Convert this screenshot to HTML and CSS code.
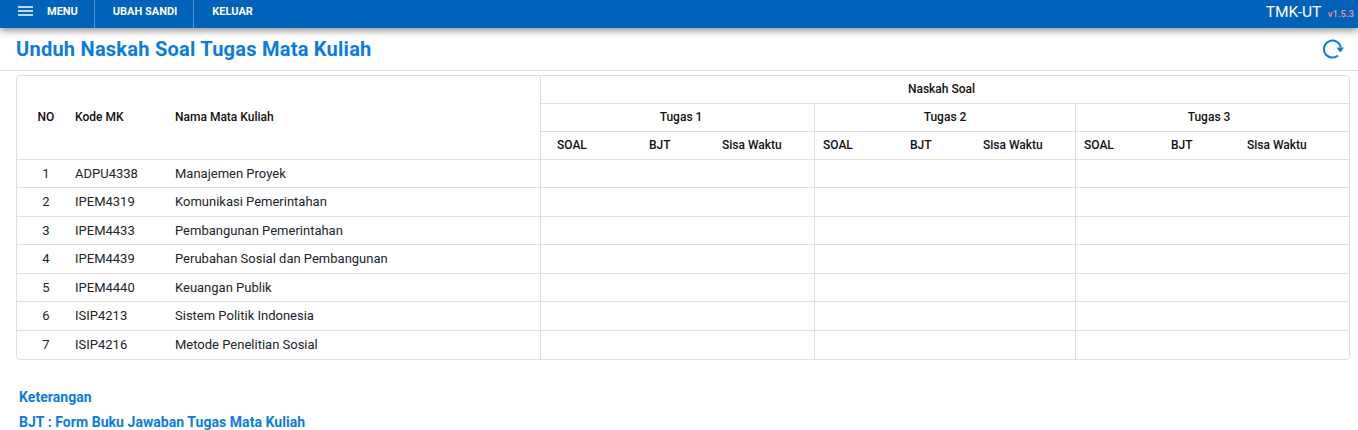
FILE: index.html
```html
<!DOCTYPE html>
<html>
<head>
  <title>Unduh Naskah Soal Tugas Mata Kuliah</title>
  <link rel="stylesheet" href="styles.css">
</head>
<body>
  <header class="topbar">
    <nav class="nav">
      <a class="nav-item nav-menu">
        <svg class="burger" width="15" height="10" viewBox="0 0 15 10"><path d="M0 1h15M0 5h15M0 9h15" stroke="#fff" stroke-width="1.7" fill="none"/></svg>
        MENU
      </a>
      <a class="nav-item">UBAH SANDI</a>
      <a class="nav-item nav-last">KELUAR</a>
    </nav>
    <div class="brand">TMK-UT <span class="version">v1.5.3</span></div>
  </header>

  <div class="title-row">
    <h1>Unduh Naskah Soal Tugas Mata Kuliah</h1>
    <svg class="refresh" width="21" height="20" viewBox="0 0 21 20">
      <path d="M15 16.500A8.500 8.500 0 1 1 17.800 8.500" fill="none" stroke="#0a7ce0" stroke-width="2"/>
      <path d="M13.500 8.500h7.500l-3.700 5z" fill="#0a7ce0"/>
    </svg>
  </div>

  <div class="table-wrap">
    <table class="grid">
      <colgroup>
        <col style="width:50px"><col style="width:100px"><col style="width:374px">
        <col style="width:100px"><col style="width:73px"><col style="width:101px">
        <col style="width:87px"><col style="width:73px"><col style="width:101px">
        <col style="width:87px"><col style="width:76px"><col>
      </colgroup>
      <thead>
        <tr>
          <th rowspan="3" class="no">NO</th>
          <th rowspan="3" class="left">Kode MK</th>
          <th rowspan="3" class="left sep">Nama Mata Kuliah</th>
          <th colspan="9" class="push-left">Naskah Soal</th>
        </tr>
        <tr>
          <th colspan="3" class="sep push-right">Tugas 1</th>
          <th colspan="3" class="sep">Tugas 2</th>
          <th colspan="3" class="push-left">Tugas 3</th>
        </tr>
        <tr>
          <th class="left first">SOAL</th><th class="left">BJT</th><th class="left sep">Sisa Waktu</th>
          <th class="left">SOAL</th><th class="left">BJT</th><th class="left sep">Sisa Waktu</th>
          <th class="left">SOAL</th><th class="left">BJT</th><th class="left">Sisa Waktu</th>
        </tr>
      </thead>
      <tbody>
        <tr><td class="no">1</td><td>ADPU4338</td><td class="sep">Manajemen Proyek</td><td></td><td></td><td class="sep"></td><td></td><td></td><td class="sep"></td><td></td><td></td><td></td></tr>
        <tr><td class="no">2</td><td>IPEM4319</td><td class="sep">Komunikasi Pemerintahan</td><td></td><td></td><td class="sep"></td><td></td><td></td><td class="sep"></td><td></td><td></td><td></td></tr>
        <tr><td class="no">3</td><td>IPEM4433</td><td class="sep">Pembangunan Pemerintahan</td><td></td><td></td><td class="sep"></td><td></td><td></td><td class="sep"></td><td></td><td></td><td></td></tr>
        <tr><td class="no">4</td><td>IPEM4439</td><td class="sep">Perubahan Sosial dan Pembangunan</td><td></td><td></td><td class="sep"></td><td></td><td></td><td class="sep"></td><td></td><td></td><td></td></tr>
        <tr><td class="no">5</td><td>IPEM4440</td><td class="sep">Keuangan Publik</td><td></td><td></td><td class="sep"></td><td></td><td></td><td class="sep"></td><td></td><td></td><td></td></tr>
        <tr><td class="no">6</td><td>ISIP4213</td><td class="sep">Sistem Politik Indonesia</td><td></td><td></td><td class="sep"></td><td></td><td></td><td class="sep"></td><td></td><td></td><td></td></tr>
        <tr><td class="no">7</td><td>ISIP4216</td><td class="sep">Metode Penelitian Sosial</td><td></td><td></td><td class="sep"></td><td></td><td></td><td class="sep"></td><td></td><td></td><td></td></tr>
      </tbody>
    </table>
  </div>

  <div class="notes">
    <p>Keterangan</p>
    <p>BJT : Form Buku Jawaban Tugas Mata Kuliah</p>
  </div>
</body>
</html>
```

FILE: styles.css
```css
html, body {
  height: 430px;
  overflow: hidden;
}
body {
  font-family: Roboto, sans-serif;
  font-size: 13px;
  line-height: 1.5;
  background-color: #fff;
  color: #212529;
  margin: 0;
  padding: 0;
}
.topbar {
  display: flex;
  align-items: flex-start;
  justify-content: space-between;
  height: 28px;
  background-color: #0062b8;
  box-shadow: 0 2px 8px rgba(0,0,0,0.5);
  color: #fff;
}
.nav {
  display: flex;
}
.nav-item {
  display: flex;
  align-items: center;
  height: 28px;
  padding: 0 16px 4px 18px;
  box-sizing: border-box;
  font-size: 11px;
  font-weight: 700;
  border-right: 1px solid #4a90cf;
}
.nav-last {
  border-right: none;
}
.burger {
  margin: 0 14px 2px 0;
}
.brand {
  font-size: 15.500px;
  line-height: 24px;
  padding-right: 4px;
}
.version {
  font-size: 9.500px;
  font-weight: 500;
  margin-left: 3px;
  color: #f0909f;
}
.title-row {
  display: flex;
  align-items: center;
  justify-content: space-between;
  height: 42px;
  padding: 0 14px 0 16px;
  border-bottom: 1px solid #e0e0e0;
}
h1 {
  font-size: 20px;
  font-weight: 700;
  letter-spacing: 0.25px;
  color: #0a7ce0;
  margin: 0;
}
.refresh {
  display: block;
}
.table-wrap {
  margin: 3.800px 8px 0 16px;
  border: 1px solid #e0e0e0;
  border-radius: 4px;
}
.grid {
  width: 100%;
  table-layout: fixed;
  border-collapse: separate;
  border-spacing: 0;
}
.grid th {
  height: 28px;
  padding: 0 0 1px;
  box-sizing: border-box;
  font-size: 12px;
  font-weight: 500;
  color: #111;
  border-bottom: 1px solid #e0e0e0;
}
.grid td {
  padding: 4px 0;
  height: 28.500px;
  box-sizing: border-box;
  border-bottom: 1px solid #e0e0e0;
  white-space: nowrap;
}
.grid tbody tr:last-child td {
  border-bottom: none;
}
.grid th.left {
  text-align: left;
  padding-left: 8px;
}
.grid th.first {
  padding-left: 16px;
}
.grid th.push-right {
  padding-left: 7px;
}
.grid th.push-left {
  padding-right: 7px;
}
.grid td:nth-child(2), .grid td:nth-child(3) {
  padding-left: 8px;
}
.grid .no {
  text-align: center;
  padding-left: 8px;
}
.grid .sep {
  border-right: 1px solid #e0e0e0;
}
.notes {
  margin: 27px 0 0 19px;
  font-size: 14px;
  font-weight: 700;
  letter-spacing: 0.05px;
  color: #0a7ce0;
}
.notes p {
  margin: 0 0 4px;
}
```
